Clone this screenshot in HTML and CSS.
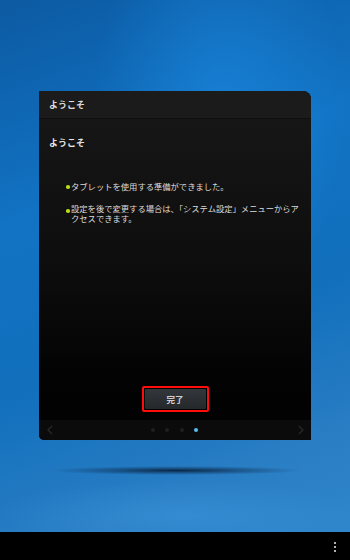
FILE: index.html
```html
<!DOCTYPE html>
<html lang="ja">
<head>
<meta charset="utf-8">
<link rel="stylesheet" href="styles.css">
</head>
<body>
<div class="screen">
  <div class="desktop">
    <div class="card">
      <div class="card-header">ようこそ</div>
      <div class="card-body">
        <div class="title">ようこそ</div>
        <ul class="bullets">
          <li>タブレットを使用する準備ができました。</li>
          <li>設定を後で変更する場合は、「システム設定」メニューからアクセスできます。</li>
        </ul>
        <div class="actions">
          <div class="highlight"><button class="done">完了</button></div>
        </div>
      </div>
      <div class="card-footer">
        <svg class="arrow" width="6" height="10" viewBox="0 0 6 10"><path d="M5 1 L1 5 L5 9" fill="none" stroke="#2a2a2a" stroke-width="1.2"/></svg>
        <div class="dots">
          <span class="dot"></span><span class="dot"></span><span class="dot"></span><span class="dot active"></span>
        </div>
        <svg class="arrow" width="6" height="10" viewBox="0 0 6 10"><path d="M1 1 L5 5 L1 9" fill="none" stroke="#2a2a2a" stroke-width="1.2"/></svg>
      </div>
    </div>
    <div class="shadow"></div>
  </div>
  <div class="navbar">
    <div class="menu"><span></span><span></span><span></span></div>
  </div>
</div>
</body>
</html>
```
FILE: styles.css
```css
* { box-sizing: border-box; }
html, body { margin: 0; padding: 0; }
body {
  width: 350px;
  height: 560px;
  overflow: hidden;
  font-family: "Noto Sans CJK JP", "Noto Sans", sans-serif;
}
.screen {
  width: 350px;
  height: 560px;
  display: flex;
  flex-direction: column;
}
.desktop {
  height: 532px;
  padding: 91px 0 0 39px;
  display: flex;
  flex-direction: column;
  background:
    radial-gradient(ellipse 260px 50px at 180px 515px, rgba(70,160,230,0.35), rgba(70,160,230,0) 70%),
    radial-gradient(ellipse 180px 300px at 220px 110px, rgba(30,145,235,0.5), rgba(30,145,235,0) 70%),
    linear-gradient(160deg, #0c5aa2 0%, #1273c4 35%, #116fbc 60%, #2a7ec4 85%, #2f86cb 100%);
}
.card {
  width: 272px;
  height: 349px;
  background: #0a0a0a;
  border-radius: 0 8px 0 5px;
  display: flex;
  flex-direction: column;
  overflow: hidden;
}
.card-header {
  height: 28px;
  flex: none;
  background: #1b1b1b;
  border-bottom: 1px solid #0f0f0f;
  color: #dedede;
  font-size: 9px;
  font-weight: bold;
  padding: 9px 0 0 10px;
  line-height: 10px;
}
.card-body {
  flex: 1;
  display: flex;
  flex-direction: column;
  padding: 19px 10px 8px 10px;
  background: linear-gradient(#161616 0%, #0d0d0d 50%, #030303 85%, #020202 100%);
}
.title {
  color: #e6e6e6;
  font-size: 9px;
  font-weight: bold;
  line-height: 10px;
}
.bullets {
  list-style: none;
  margin: 34px -2px 0 0;
  padding: 0 0 0 22px;
  color: #dcdcdc;
  font-size: 8.3px;
  line-height: 9.5px;
}
.bullets li {
  position: relative;
  margin-bottom: 12.5px;
}
.bullets li::before {
  content: "";
  position: absolute;
  left: -5px;
  top: 3px;
  width: 3.5px;
  height: 3.5px;
  border-radius: 50%;
  background: #b9dc16;
}
.bullets li + li::before { top: 5px; }
.actions {
  margin-top: auto;
  display: flex;
  justify-content: center;
}
.highlight {
  width: 67px;
  height: 26px;
  border: 2px solid #ff0d0d;
  border-radius: 2px;
  padding: 1px;
  display: flex;
}
.done {
  flex: 1;
  border: none;
  border-radius: 1px;
  background: linear-gradient(#33363a, #25282b);
  color: #cfcfcf;
  font-family: inherit;
  font-size: 8.5px;
  font-weight: bold;
  padding: 0;
}
.card-footer {
  height: 20px;
  flex: none;
  background: #0b0b0b;
  display: flex;
  align-items: center;
  justify-content: space-between;
  padding: 0 7px 0 8px;
}
.dots {
  display: flex;
  gap: 10.5px;
  margin-left: -2px;
}
.dot {
  width: 4px;
  height: 4px;
  border-radius: 50%;
  background: #1f1f1f;
}
.dot.active { background: #55bdf0; }
.arrow { display: block; }
.shadow {
  width: 250px;
  height: 9px;
  margin: 26px 0 0 12px;
  background: radial-gradient(ellipse 50% 50% at 50% 50%, rgba(5,25,50,0.85), rgba(5,25,50,0.35) 55%, rgba(5,25,50,0) 100%);
}
.navbar {
  height: 28px;
  background: #000;
  display: flex;
  justify-content: flex-end;
  align-items: center;
  padding-right: 14px;
}
.menu {
  display: flex;
  flex-direction: column;
  gap: 2px;
  margin-top: 2px;
}
.menu span {
  width: 2px;
  height: 2px;
  background: #b0b0b0;
}
```
